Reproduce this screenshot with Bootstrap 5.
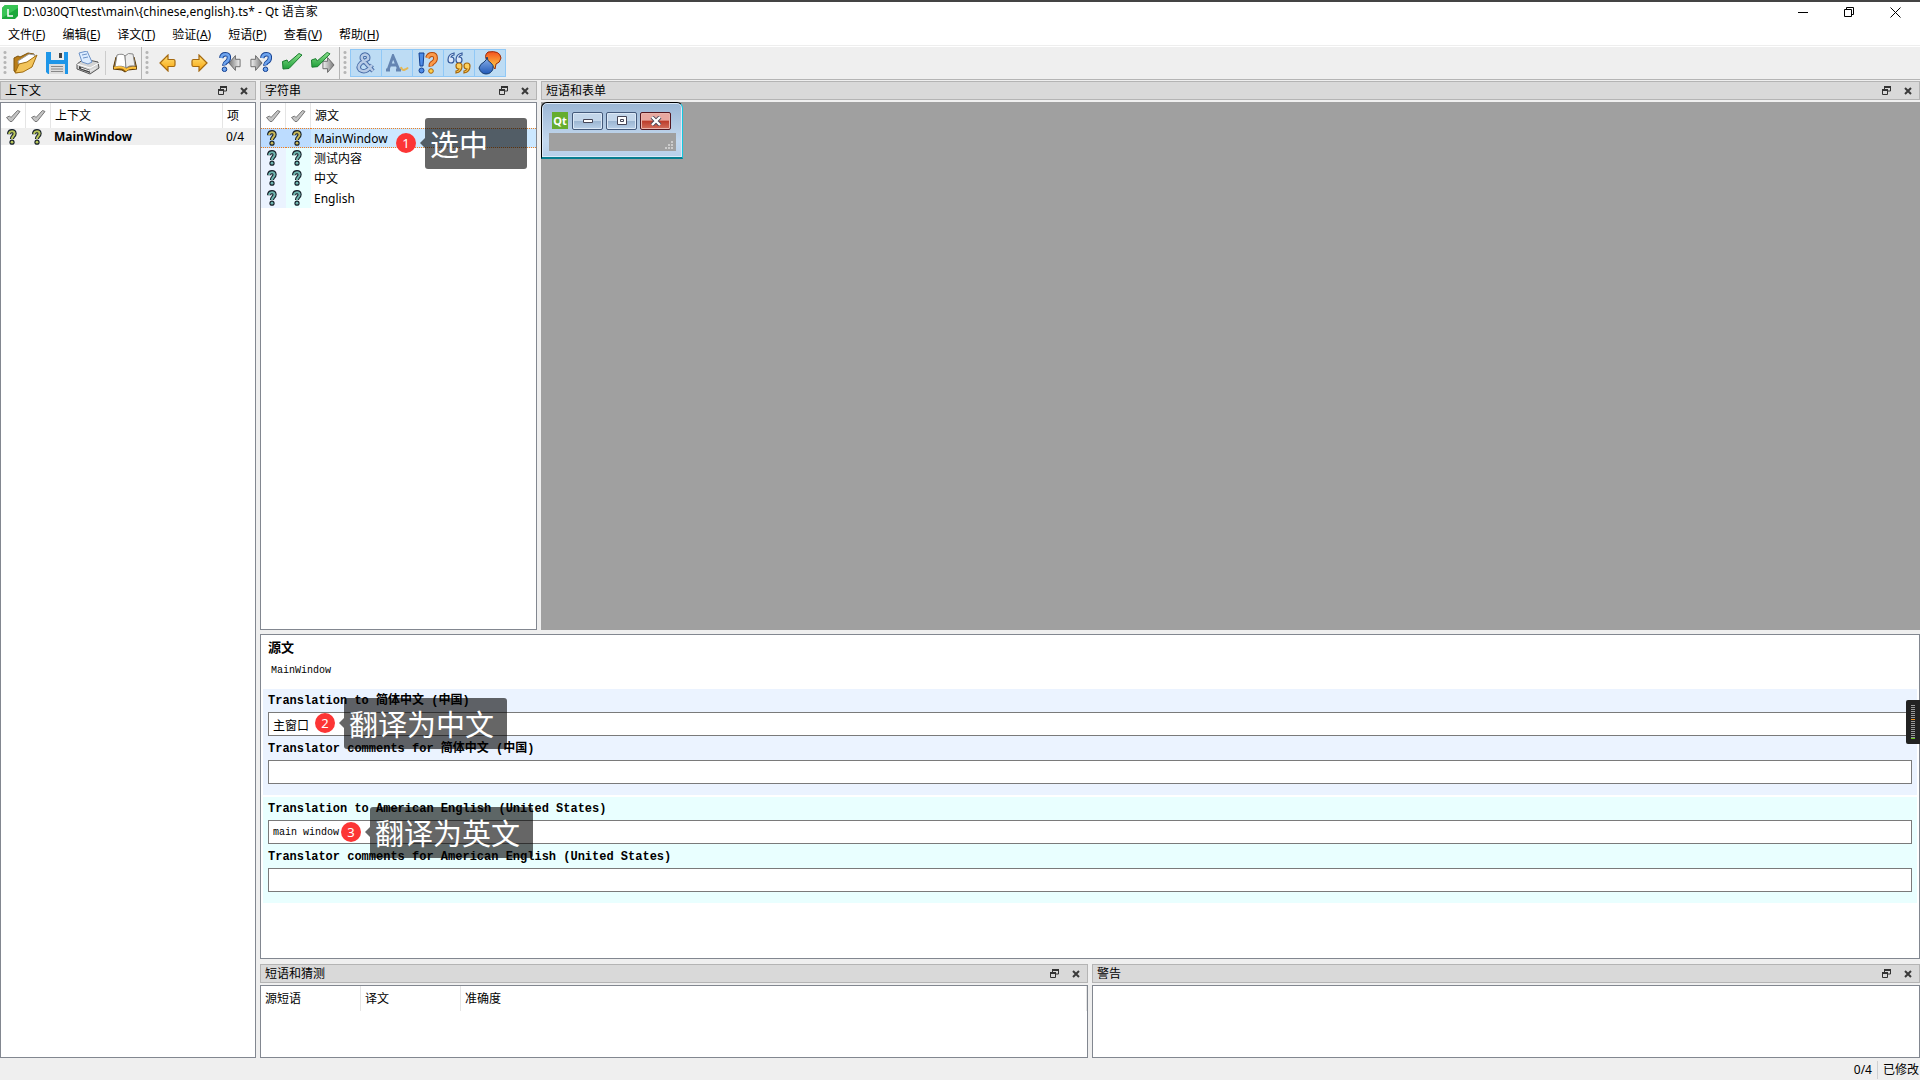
<!DOCTYPE html>
<html lang="zh-CN">
<head>
<meta charset="utf-8">
<meta name="viewport" content="width=device-width, initial-scale=1">
<title>Qt 语言家</title>
<link href="https://cdn.jsdelivr.net/npm/bootstrap@5.3.0/dist/css/bootstrap.min.css" rel="stylesheet">
<style>
body{font:12px/16px "Noto Sans","Noto Sans CJK SC",sans-serif;color:#000;background:#efefef;overflow:hidden}
button{font:inherit;color:inherit;background:none;border:0;padding:0}
svg{display:block}
.topstrip{height:2px;background:#444;flex:none}
.titlebar{height:20px;padding:0 2px}
.titlebar .wbtn{width:46px;height:18px}
.titletext{margin-left:5px}
.menus{height:24px;border-bottom:1px solid #eee;gap:1px}
.menus a{color:#000;text-decoration:none;padding:0 8px;line-height:25px}
.tools{height:34px;border-top:1px solid #fff;border-bottom:1px solid #b4b4b4;flex:none}
.toolgroup{border-right:1px solid #b4b4b4;padding-right:1px}
.grip{width:10px;height:26px;background:radial-gradient(circle,#b5b5b5 1px,transparent 2px) 3px 0/4px 5px repeat-y}
.tbtn{width:31px;height:28px}
.tbtn.toggled{background:#bddcf4;border:1px solid #90c8f6;margin-right:-1px;width:32px}
.toolsep{width:1px;height:24px;background:#ccc;margin:0 3px 0 2px}
.workspace{min-height:0;padding-top:1px;gap:4px}
.leftdock{width:256px;flex:none}
.strings{width:277px;flex:none}
.stack{gap:4px}
.dockhead{height:19px;background:#d9d9d9;border:1px solid #b4b4b4;padding:0 1px 0 4px;margin-bottom:2px;flex:none}
.dockhead span{line-height:18px}
.dockhead button{width:21px;height:17px}
.pane{background:#fff;border:1px solid #828790;flex:1 1 0;min-height:0}
.grid{width:100%;table-layout:fixed;border-collapse:separate;border-spacing:0;line-height:16px}
.grid th{height:25px;font-weight:400;border-right:1px solid #e5e5e5;padding:0 0 0 4px}
.grid td{height:20px;padding:2px 0 0 3px}
.grid .ic{padding:0;width:25px}
.grid .ic svg{margin-left:4px}
.grid td.ic svg{margin-left:3px}
.compact td{height:17px;background:#efefef;padding-top:0}
.zh{background:#ebf3ff}.en{background:#e9ffff}
.picked td{background:#cce8ff;border-top:1px dotted #f08020;border-bottom:1px dotted #f08020}
.picked td.ic{background:#bcdcff}
.ask-left{color:#b9c55a}.ask-pick{color:#c9b95a}.ask-none{color:#6fb5b0}
.formarea{background:#a0a0a0;flex:1 1 0}
.miniwin{width:142px;height:57px;border:1px solid #000;border-right-color:#14c8e0;border-bottom:2px solid #087e90;border-radius:6px 6px 0 0;background:linear-gradient(#9bb6d4,#c3d8ee 70%,#b8d0ea);padding:8px 6px 6px 7px;box-shadow:inset 0 0 0 1px #dceaf8}
.miniwin .caps{height:22px;gap:3px;padding:1px 2px 0 3px}
.qtmark{width:16px;height:17px;background:#66ad2e;color:#fff;font:bold 11px/17px "Noto Sans",sans-serif;text-align:center;margin-right:1px}
.capbtn{width:31px;height:18px;border:1px solid #43597a;border-radius:2px;background:linear-gradient(#c3d6ea 48%,#9bb5d1 50%,#b9d0e8);box-shadow:inset 0 0 0 1px #dbe8f6}
.capbtn.stop{border-color:#531720;background:linear-gradient(#e8a8a0 45%,#bc3b2a 50%,#d2705e);box-shadow:inset 0 0 0 1px #eab5ac}
.miniwin .inside{height:18px;background:#a0a0a0}
.editor{height:325px;flex:none;background:#fff;border:1px solid #828790;padding:0 2px;margin-bottom:1px}
.srcblock{height:54px;padding:2px 5px 0}
.heading{font:bold 13px/20px "Noto Sans CJK SC",sans-serif}
.srctext{font:10px/28px "Liberation Mono","Noto Sans CJK SC",monospace;padding-left:3px}
.transblock{height:106px;padding:0 5px;margin-bottom:2px}
.transblock label{display:block;height:23px;font:bold 12px/25px "Liberation Mono","Noto Sans CJK SC",monospace;white-space:nowrap}
.transblock .entry + label{margin-top:1px}
.entry{position:relative}
.entry input{display:block;width:100%;height:24px;border:1px solid #7a7a7a;padding:0 4px;font:12px/20px "Noto Sans CJK SC",sans-serif;color:#000;outline:0;background:#fff}
.entry input.latin{font:10px/20px "Liberation Mono",monospace}
.bottomdocks{height:94px;flex:none;gap:4px}
.statusline{height:22px;flex:none;padding:2px 1px 0 0}
.statusline .sep{width:1px;height:18px;background:#d0d0d0;margin:0 5px}
.note{position:absolute;display:flex;align-items:center;z-index:5;pointer-events:none;white-space:nowrap}
.dot{width:20px;height:20px;border-radius:50%;background:#fc3535;color:#fff;font:13px/20px "Noto Sans",sans-serif;text-align:center;margin-bottom:2px}
.tip{position:relative;background:rgba(0,0,0,.6);color:#fff;border-radius:3px;height:51px;padding:0 5px;font:400 29px/50px "Noto Sans CJK SC",sans-serif}
.tip::before{content:"";position:absolute;right:100%;top:20px;border:5px solid transparent;border-left:0;border-right-color:rgba(0,0,0,.6)}
.n1{left:136px;top:37px}.n1 .tip{width:102px;margin-left:9px}
.n2{left:47px;top:-14px}.n2 .tip,.n3 .tip{width:163px;margin-left:9px}
.n3{left:73px;top:-13px}
.meter{position:fixed;right:0;top:700px;width:14px;height:44px;background:#222;border-radius:2px 0 0 2px;z-index:6}
</style>
<script src="https://cdn.jsdelivr.net/npm/bootstrap@5.3.0/dist/js/bootstrap.bundle.min.js"></script>
</head>
<body class="d-flex flex-column vh-100">
<svg width="0" height="0" class="position-absolute" aria-hidden="true">
 <defs>
  <linearGradient id="gold" x2="0" y2="1"><stop stop-color="#ffe27a"/><stop offset="1" stop-color="#f7a30a"/></linearGradient>
  <linearGradient id="steel"><stop stop-color="#f2f2f2"/><stop offset="1" stop-color="#777"/></linearGradient>
  <linearGradient id="leaf" x2="0" y2="1"><stop stop-color="#8be08b"/><stop offset="1" stop-color="#1fa03a"/></linearGradient>
  <linearGradient id="sea" x2="0" y2="1"><stop stop-color="#8fb4ea"/><stop offset="1" stop-color="#2059b8"/></linearGradient>
  <linearGradient id="fire" x2="0" y2="1"><stop stop-color="#f4511e"/><stop offset="1" stop-color="#ffd54a"/></linearGradient>
  <symbol id="float" viewBox="0 0 9 9"><path d="M2.5 3V.5h6V5H6M.5 3.5h5v5h-5z" fill="none" stroke="#333"/><path d="M2 1h7M0 4h6" stroke="#333" stroke-width="2"/></symbol>
  <symbol id="cross" viewBox="0 0 8 8"><path d="M1 1l6 6M7 1L1 7" stroke="#3a3a3a" stroke-width="2"/></symbol>
  <symbol id="tick" viewBox="0 0 16 14"><path d="M1.500 8.500L4.500 7l1.500 1.500L12.500 1.500 15 2.500 7 12.500H5z" fill="#c4c4c4" stroke="#777"/></symbol>
  <symbol id="ask" viewBox="0 0 10 16"><path d="M2.200 5.200V4q.5-1.800 2.800-1.800T7.600 4.500Q7.600 6 6.200 7.200 5 8.300 5 10" fill="none" stroke="#16202a" stroke-width="4.200"/><circle cx="5" cy="13.200" r="2.600" fill="#16202a"/><path d="M2.200 5V4q.5-1.800 2.800-1.800T7.600 4.500Q7.600 6 6.200 7.200 5 8.300 5 10" fill="none" stroke="currentColor" stroke-width="2"/><circle cx="5" cy="13.200" r="1.400" fill="currentColor"/></symbol>
  <symbol id="arrowL" viewBox="0 0 18 18"><path d="M1 9l8-8v4.500h5.500q1.500 0 1.500 1.500v4q0 1.500-1.500 1.500H9V17z" fill="url(#gold)" stroke="#a5690f" stroke-width="1.200"/></symbol>
  <symbol id="quest" viewBox="0 0 12 20"><path d="M2.200 6q.5-3.800 4.300-3.800T9.800 6q0 2.500-2.400 4T5.500 13.500" fill="none" stroke="#123f91" stroke-width="4.400"/><circle cx="5.500" cy="17.300" r="2.300" fill="#6ea4ee" stroke="#123f91"/><path d="M2.200 6q.5-3.800 4.300-3.800T9.800 6q0 2.500-2.400 4T5.500 13" fill="none" stroke="#6ea4ee" stroke-width="2.600"/></symbol>
  <symbol id="grayR" viewBox="0 0 14 18"><path d="M1 5h5V1l7 8-7 8v-4H1z" fill="url(#steel)" stroke="#666"/></symbol>
  <symbol id="okay" viewBox="0 0 22 20"><path d="M1.500 9.500L6 8l1.500 2.500L18 1.500l3 1.500L8 16.500 2 17z" fill="url(#leaf)" stroke="#177a2c"/></symbol>
 </defs>
</svg>
<div class="topstrip"></div>
<header class="bg-white flex-shrink-0">
 <div class="titlebar d-flex align-items-center">
  <svg width="16" height="16" viewBox="0 0 16 16"><path d="M3 1h13v11l-3 3H0V4z" fill="#1aa83a"/><path d="M3 1h13v3L0 14V4z" fill="#38c455"/><path d="M6 5v7h5" stroke="#fff" stroke-width="1.500" fill="none"/></svg>
  <span class="titletext">D:\030QT\test\main\{chinese,english}.ts* - Qt 语言家</span>
  <div class="ms-auto d-flex">
   <button class="wbtn" aria-label="最小化"><svg class="mx-auto" width="11" height="11"><path d="M0 5.500h10" stroke="#000"/></svg></button>
   <button class="wbtn" aria-label="还原"><svg class="mx-auto" width="11" height="11"><path d="M.5 2.500h7v7h-7zM2.500 2.500v-2h7v7h-2" stroke="#000" fill="none"/></svg></button>
   <button class="wbtn" aria-label="关闭"><svg class="mx-auto" width="11" height="11"><path d="M.5.5l10 10M10.500.5l-10 10" stroke="#000" fill="none"/></svg></button>
  </div>
 </div>
 <nav class="menus d-flex" aria-label="菜单">
  <a href="#">文件(<u>F</u>)</a><a href="#">编辑(<u>E</u>)</a><a href="#">译文(<u>T</u>)</a><a href="#">验证(<u>A</u>)</a><a href="#">短语(<u>P</u>)</a><a href="#">查看(<u>V</u>)</a><a href="#">帮助(<u>H</u>)</a>
 </nav>
</header>
<div class="tools d-flex" role="toolbar">
 <div class="toolgroup d-flex align-items-center">
  <div class="grip"></div>
  <button class="tbtn" aria-label="打开"><svg class="mx-auto" width="26" height="24" viewBox="0 0 26 24"><path d="M1 7l4-2 2 1 8-4 6 1v5L4 22l-3-2z" fill="#b97d18" stroke="#7d520b"/><path d="M5 10L16 3l6 1-1 6L6 18z" fill="#fff" stroke="#999"/><path d="M2 22l4-9 8-2L24 4l-5 12-9 5z" fill="#f3c45a" stroke="#a06c10"/></svg></button>
  <button class="tbtn" aria-label="保存"><svg class="mx-auto" width="22" height="22" viewBox="0 0 22 22"><path d="M0 0h22v22H2l-2-2z" fill="#1e96e8"/><path d="M5 0h13v8H5z" fill="#eee"/><path d="M13 1h3v5h-3z" fill="#444"/><path d="M3 12h16v10H3z" fill="#ddd"/><path d="M5 14.500h12M5 17h12M5 19.500h12" stroke="#888"/></svg></button>
  <button class="tbtn" aria-label="打印"><svg class="mx-auto" width="24" height="24" viewBox="0 0 24 24"><path d="M1 13l7-5 14 3 1 6-9 6L1 18z" fill="#d4d4d4" stroke="#555"/><path d="M6 11L3 2l8-2 5 11-4 2z" fill="#dcecff" stroke="#6d93c8"/><path d="M6 4l5-1M7 7l5-1" stroke="#6d93c8"/><path d="M1 13l13 4 9-5" fill="none" stroke="#fff"/><path d="M3 15l11 4v3L3 18z" fill="#444"/><path d="M5 17l9 3 6-3" stroke="#eee" fill="none"/></svg></button>
  <div class="toolsep"></div>
  <button class="tbtn" aria-label="短语书"><svg class="mx-auto" width="24" height="20" viewBox="0 0 24 20"><path d="M3 4h18l3 12-9 1-3 2-3-2-9-1z" fill="#9a640f" stroke="#5b3903"/><path d="M4 2q6-2 8 1l1 12q-4-3-11-1z" fill="#fff" stroke="#888"/><path d="M12 3q3-4 8-2l2 12q-6-1-9 2z" fill="#ececec" stroke="#888"/><path d="M1 15q9-2 12 2 3-3 10-2" stroke="#ffc23c" stroke-width="2" fill="none"/></svg></button>
 </div>
 <div class="toolgroup d-flex align-items-center">
  <div class="grip"></div>
  <button class="tbtn" aria-label="上一条"><svg class="mx-auto" width="18" height="18"><use href="#arrowL"/></svg></button>
  <button class="tbtn" aria-label="下一条"><svg class="mx-auto" width="18" height="18"><use href="#arrowL" transform="matrix(-1 0 0 1 18 0)"/></svg></button>
  <button class="tbtn" aria-label="上一未完成"><svg class="mx-auto" width="22" height="22"><use href="#grayR" transform="matrix(-1 0 0 1 22 2)" width="13" height="18"/><use href="#quest" width="12" height="20"/></svg></button>
  <button class="tbtn" aria-label="下一未完成"><svg class="mx-auto" width="22" height="22"><use href="#grayR" y="2" width="13" height="18"/><use href="#quest" x="10" width="12" height="20"/></svg></button>
  <button class="tbtn" aria-label="完成"><svg class="mx-auto" width="22" height="22"><use href="#okay" width="22" height="20"/></svg></button>
  <button class="tbtn" aria-label="完成并下一条"><svg class="mx-auto" width="25" height="24"><use href="#grayR" x="12" y="5" width="13" height="18"/><use href="#okay" width="21" height="19"/></svg></button>
 </div>
 <div class="d-flex align-items-center">
  <div class="grip"></div>
  <button class="tbtn toggled" aria-label="加速键"><svg class="mx-auto" width="20" height="22" viewBox="0 0 20 22"><path d="M17 19L6 7q-1-4 3-4.500 4 .5 3 4.500L5 11q-4 4-1 7 6 4 12-5" fill="none" stroke="#4a6ea8" stroke-width="4.500"/><path d="M17 19L6 7q-1-4 3-4.500 4 .5 3 4.500L5 11q-4 4-1 7 6 4 12-5" fill="none" stroke="#b7cbe6" stroke-width="2.500"/></svg></button>
  <button class="tbtn toggled" aria-label="空白"><svg class="mx-auto" width="24" height="18" viewBox="0 0 24 18"><path d="M1 16h4M3 16L8 2l6 14M11 16h5M5 11h6" fill="none" stroke="#6485b2" stroke-width="2.800"/><path d="M16 13q1 4 4 2.500 2-.5 3-2" stroke="#e5b853" stroke-width="2" fill="none"/></svg></button>
  <button class="tbtn toggled" aria-label="标点"><svg class="mx-auto" width="20" height="22" viewBox="0 0 20 22"><path d="M1 1h5L5 14H2z" fill="#4d8be6" stroke="#123f91"/><circle cx="3.500" cy="18.500" r="2.500" fill="#4d8be6" stroke="#123f91"/><path d="M9.500 6q1-3.500 4.500-3.500T17.500 6q0 3-2.500 4.500T13 14.500" fill="none" stroke="#b5490a" stroke-width="4.800"/><path d="M9.500 6q1-3.500 4.500-3.500T17.500 6q0 3-2.500 4.500T13 14" fill="none" stroke="#fb9a4a" stroke-width="2.800"/><circle cx="13" cy="19" r="2.300" fill="#ffd04d" stroke="#a8620a"/></svg></button>
  <button class="tbtn toggled" aria-label="短语"><svg class="mx-auto" width="24" height="22" viewBox="0 0 24 22"><g fill="#dce8fa" stroke="#34599b" stroke-width="1.200"><path d="M7 1Q1 2 1 8q0 3 3 3t3-3-3-3q1-2 3-2z"/><path d="M15 1Q9 2 9 8q0 3 3 3t3-3-3-3q1-2 3-2z"/></g><g fill="#ffd15c" stroke="#a9690b" stroke-width="1.200"><path d="M9 21q6-1 6-7 0-3-3-3t-3 3 3 3q-1 2-3 2z"/><path d="M17 21q6-1 6-7 0-3-3-3t-3 3 3 3q-1 2-3 2z"/></g></svg></button>
  <button class="tbtn toggled" aria-label="占位符"><svg class="mx-auto" width="24" height="24" viewBox="0 0 24 24"><path d="M10 1q12-2 13 6-1 5-5 6l-1 5q-3-5-7-7-5-6 0-10z" fill="url(#fire)" stroke="#9c2b08"/><path d="M9 6q0 4 4 6 3 2 2 6-2 5-7 5t-7-6q1-4 5-6 3-2 3-5z" fill="url(#sea)" stroke="#173d70"/></svg></button>
 </div>
</div>
<main class="workspace d-flex flex-grow-1">
 <section class="leftdock d-flex flex-column">
  <div class="dockhead d-flex align-items-center"><span>上下文</span><button class="ms-auto" aria-label="浮动"><svg class="mx-auto" width="9" height="9"><use href="#float"/></svg></button><button aria-label="关闭"><svg class="mx-auto" width="8" height="8"><use href="#cross"/></svg></button></div>
  <div class="pane">
   <table class="grid compact"><colgroup><col style="width:25px"><col style="width:25px"><col><col style="width:32px"></colgroup>
    <thead><tr><th class="ic"><svg width="16" height="14"><use href="#tick"/></svg></th><th class="ic"><svg width="16" height="14"><use href="#tick"/></svg></th><th>上下文</th><th class="border-0">项</th></tr></thead>
    <tbody><tr><td class="ic"><svg class="ask-left" width="16" height="16"><use href="#ask"/></svg></td><td class="ic"><svg class="ask-left" width="16" height="16"><use href="#ask"/></svg></td><td class="fw-bold">MainWindow</td><td>0/4</td></tr></tbody>
   </table>
  </div>
 </section>
 <div class="stack d-flex flex-column flex-grow-1">
  <div class="d-flex flex-grow-1 gap-1">
   <section class="strings d-flex flex-column position-relative">
    <div class="dockhead d-flex align-items-center"><span>字符串</span><button class="ms-auto" aria-label="浮动"><svg class="mx-auto" width="9" height="9"><use href="#float"/></svg></button><button aria-label="关闭"><svg class="mx-auto" width="8" height="8"><use href="#cross"/></svg></button></div>
    <div class="pane">
     <table class="grid"><colgroup><col style="width:25px"><col style="width:25px"><col></colgroup>
      <thead><tr><th class="ic"><svg width="16" height="14"><use href="#tick"/></svg></th><th class="ic"><svg width="16" height="14"><use href="#tick"/></svg></th><th class="border-0">源文</th></tr></thead>
      <tbody>
       <tr class="picked"><td class="ic"><svg class="ask-pick" width="16" height="16"><use href="#ask"/></svg></td><td class="ic"><svg class="ask-pick" width="16" height="16"><use href="#ask"/></svg></td><td>MainWindow</td></tr>
       <tr><td class="ic zh"><svg class="ask-none" width="16" height="16"><use href="#ask"/></svg></td><td class="ic en"><svg class="ask-none" width="16" height="16"><use href="#ask"/></svg></td><td>测试内容</td></tr>
       <tr><td class="ic zh"><svg class="ask-none" width="16" height="16"><use href="#ask"/></svg></td><td class="ic en"><svg class="ask-none" width="16" height="16"><use href="#ask"/></svg></td><td>中文</td></tr>
       <tr><td class="ic zh"><svg class="ask-none" width="16" height="16"><use href="#ask"/></svg></td><td class="ic en"><svg class="ask-none" width="16" height="16"><use href="#ask"/></svg></td><td>English</td></tr>
      </tbody>
     </table>
    </div>
    <div class="note n1"><span class="dot">1</span><span class="tip">选中</span></div>
   </section>
   <section class="d-flex flex-column flex-grow-1">
    <div class="dockhead d-flex align-items-center"><span>短语和表单</span><button class="ms-auto" aria-label="浮动"><svg class="mx-auto" width="9" height="9"><use href="#float"/></svg></button><button aria-label="关闭"><svg class="mx-auto" width="8" height="8"><use href="#cross"/></svg></button></div>
    <div class="formarea">
     <div class="miniwin">
      <div class="caps d-flex"><span class="qtmark">Qt</span>
       <button class="capbtn" aria-label="最小化"><svg class="mx-auto" width="12" height="6"><path d="M1.500 1.500h9v3h-9z" fill="#fff" stroke="#445"/></svg></button>
       <button class="capbtn" aria-label="最大化"><svg class="mx-auto" width="12" height="10"><path d="M1.500.5h9v8h-9zM4.500 3.500h3v2h-3z" fill="#fff" stroke="#445"/></svg></button>
       <button class="capbtn stop" aria-label="关闭"><svg class="mx-auto" width="12" height="10" viewBox="0 0 12 10"><path d="M2 1l8 8M10 1L2 9" stroke="#445" stroke-width="4"/><path d="M2 1l8 8M10 1L2 9" stroke="#fff" stroke-width="2.400"/></svg></button>
      </div>
      <div class="inside"><svg class="ms-auto" width="12" height="17"><path d="M7 8h2v2H7zM4 11h2v2H4zM7 11h2v2H7zM1 14h2v2H1zM4 14h2v2H4zM7 14h2v2H7z" fill="#ccc"/></svg></div>
     </div>
    </div>
   </section>
  </div>
  <section class="editor">
   <div class="srcblock"><div class="heading">源文</div><div class="srctext">MainWindow</div></div>
   <div class="transblock zh">
    <label for="t1">Translation to 简体中文 (中国)</label>
    <div class="entry"><input id="t1" type="text" value="主窗口"><div class="note n2"><span class="dot">2</span><span class="tip">翻译为中文</span></div></div>
    <label for="c1">Translator comments for 简体中文 (中国)</label>
    <div class="entry"><input id="c1" type="text"></div>
   </div>
   <div class="transblock en">
    <label for="t2">Translation to American English (United States)</label>
    <div class="entry"><input id="t2" class="latin" type="text" value="main window"><div class="note n3"><span class="dot">3</span><span class="tip">翻译为英文</span></div></div>
    <label for="c2">Translator comments for American English (United States)</label>
    <div class="entry"><input id="c2" type="text"></div>
   </div>
  </section>
  <div class="bottomdocks d-flex">
   <section class="d-flex flex-column w-50">
    <div class="dockhead d-flex align-items-center"><span>短语和猜测</span><button class="ms-auto" aria-label="浮动"><svg class="mx-auto" width="9" height="9"><use href="#float"/></svg></button><button aria-label="关闭"><svg class="mx-auto" width="8" height="8"><use href="#cross"/></svg></button></div>
    <div class="pane"><table class="grid"><colgroup><col style="width:100px"><col style="width:100px"><col></colgroup><thead><tr><th>源短语</th><th>译文</th><th>准确度</th></tr></thead></table></div>
   </section>
   <section class="d-flex flex-column w-50">
    <div class="dockhead d-flex align-items-center"><span>警告</span><button class="ms-auto" aria-label="浮动"><svg class="mx-auto" width="9" height="9"><use href="#float"/></svg></button><button aria-label="关闭"><svg class="mx-auto" width="8" height="8"><use href="#cross"/></svg></button></div>
    <div class="pane"></div>
   </section>
  </div>
 </div>
</main>
<footer class="statusline d-flex align-items-center justify-content-end"><span>0/4</span><span class="sep"></span><span>已修改</span></footer>
<div class="meter"><svg width="14" height="44"><path d="M7 5v34" stroke="#999" stroke-width="4" stroke-dasharray="1 1"/><path d="M5 19.500h4" stroke="#f29422"/><path d="M5 38.500h4" stroke="#62c015"/></svg></div>
</body>
</html>
